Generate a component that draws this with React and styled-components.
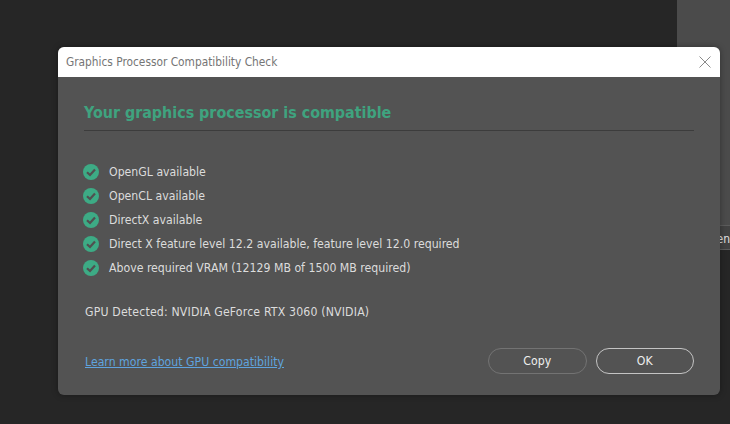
import React from 'react';
import styled, { createGlobalStyle } from 'styled-components';

const checks = [
  'OpenGL available',
  'OpenCL available',
  'DirectX available',
  'Direct X feature level 12.2 available, feature level 12.0 required',
  'Above required VRAM (12129 MB of 1500 MB required)',
];

function CheckIcon() {
  return (
    <svg width="16" height="16" viewBox="0 0 16 16">
      <circle cx="8" cy="8" r="8" fill="#3dab85" />
      <path d="M4 8.2 L7 11 L12 5.4" fill="none" stroke="#505050" strokeWidth="2.2" />
    </svg>
  );
}

export default function App() {
  return (
    <Screen>
      <GlobalStyle />
      <Canvas />
      <SidePanel>
        <TopBlock />
        <SideTab>en</SideTab>
        <BottomBlock />
      </SidePanel>
      <Dialog>
        <TitleBar>
          <TitleText>Graphics Processor Compatibility Check</TitleText>
          <CloseIcon width="12" height="12" viewBox="0 0 12 12">
            <path d="M0.5 0.5 L11.5 11.5 M11.5 0.5 L0.5 11.5" stroke="#8a8a8a" strokeWidth="1" fill="none" />
          </CloseIcon>
        </TitleBar>
        <Body>
          <Heading>Your graphics processor is compatible</Heading>
          <CheckList>
            {checks.map((text) => (
              <CheckRow key={text}>
                <CheckIcon />
                <span>{text}</span>
              </CheckRow>
            ))}
          </CheckList>
          <GpuLine>GPU Detected: NVIDIA GeForce RTX 3060 (NVIDIA)</GpuLine>
          <Footer>
            <LearnLink href="#">Learn more about GPU compatibility</LearnLink>
            <Buttons>
              <PillButton>Copy</PillButton>
              <PillButton $primary>OK</PillButton>
            </Buttons>
          </Footer>
        </Body>
      </Dialog>
    </Screen>
  );
}

const GlobalStyle = createGlobalStyle`
  html, body {
    margin: 0;
    padding: 0;
    background: #1f1f1f;
  }
`;

const Screen = styled.div`
  position: relative;
  display: flex;
  width: 730px;
  height: 424px;
  overflow: hidden;
  font-family: "DejaVu Sans", sans-serif;
  font-stretch: condensed;
`;

const Canvas = styled.div`
  flex: 1;
  background: #262626;
`;

const SidePanel = styled.div`
  width: 53px;
  display: flex;
  flex-direction: column;
  background: #1f1f1f;
`;

const TopBlock = styled.div`
  height: 225px;
  background: #4b4b4b;
`;

const SideTab = styled.div`
  height: 25px;
  box-sizing: border-box;
  text-align: right;
  line-height: 26px;
  font-size: 12px;
  color: #e0e0e0;
  background: #424242;
  border-top: 1px solid #5c5c5c;
  border-bottom: 1px solid #5c5c5c;
`;

const BottomBlock = styled.div`
  flex: 1;
  background: #262626;
`;

const Dialog = styled.div`
  position: absolute;
  left: 58px;
  top: 47px;
  width: 662px;
  height: 348px;
  display: flex;
  flex-direction: column;
  border-radius: 6px;
  overflow: hidden;
  background: #535353;
  box-shadow: 0 0 6px rgba(0, 0, 0, 0.35);
`;

const TitleBar = styled.div`
  height: 30px;
  flex: none;
  display: flex;
  align-items: center;
  justify-content: space-between;
  padding: 0 9px 0 8px;
  box-sizing: border-box;
  background: #ffffff;
`;

const TitleText = styled.span`
  font-size: 11.8px;
  color: #757575;
`;

const CloseIcon = styled.svg`
  display: block;
`;

const Body = styled.div`
  flex: 1;
  display: flex;
  flex-direction: column;
  padding: 25px 26px 21px 26px;
  color: #dcdcdc;
  font-size: 12.2px;
`;

const Heading = styled.h1`
  margin: 0;
  padding-bottom: 7px;
  border-bottom: 1px solid #3c3c3c;
  font-size: 15.9px;
  line-height: 21px;
  font-weight: 700;
  color: #3fa37f;
`;

const CheckList = styled.ul`
  list-style: none;
  margin: 29px 0 0;
  padding: 0;
  display: flex;
  flex-direction: column;
`;

const CheckRow = styled.li`
  height: 24px;
  display: flex;
  align-items: center;
  gap: 10px;
  margin-left: -1px;
`;

const GpuLine = styled.div`
  margin-top: 24px;
  line-height: 16px;
  margin-left: 1px;
  letter-spacing: 0.17px;
`;

const Footer = styled.div`
  margin-top: auto;
  display: flex;
  align-items: center;
  justify-content: space-between;
`;

const LearnLink = styled.a`
  margin-left: 1px;
  margin-top: 2px;
  color: #5fa3df;
  text-decoration: underline;
`;

const Buttons = styled.div`
  display: flex;
  gap: 9px;
`;

const PillButton = styled.button`
  width: 98.5px;
  height: 26px;
  padding: 0;
  box-sizing: border-box;
  border-radius: 13px;
  background: transparent;
  font-family: inherit;
  font-stretch: inherit;
  font-size: 12.2px;
  color: #eeeeee;
  border: 1.5px solid ${(p) => (p.$primary ? '#c4c4c4' : '#737373')};
`;
